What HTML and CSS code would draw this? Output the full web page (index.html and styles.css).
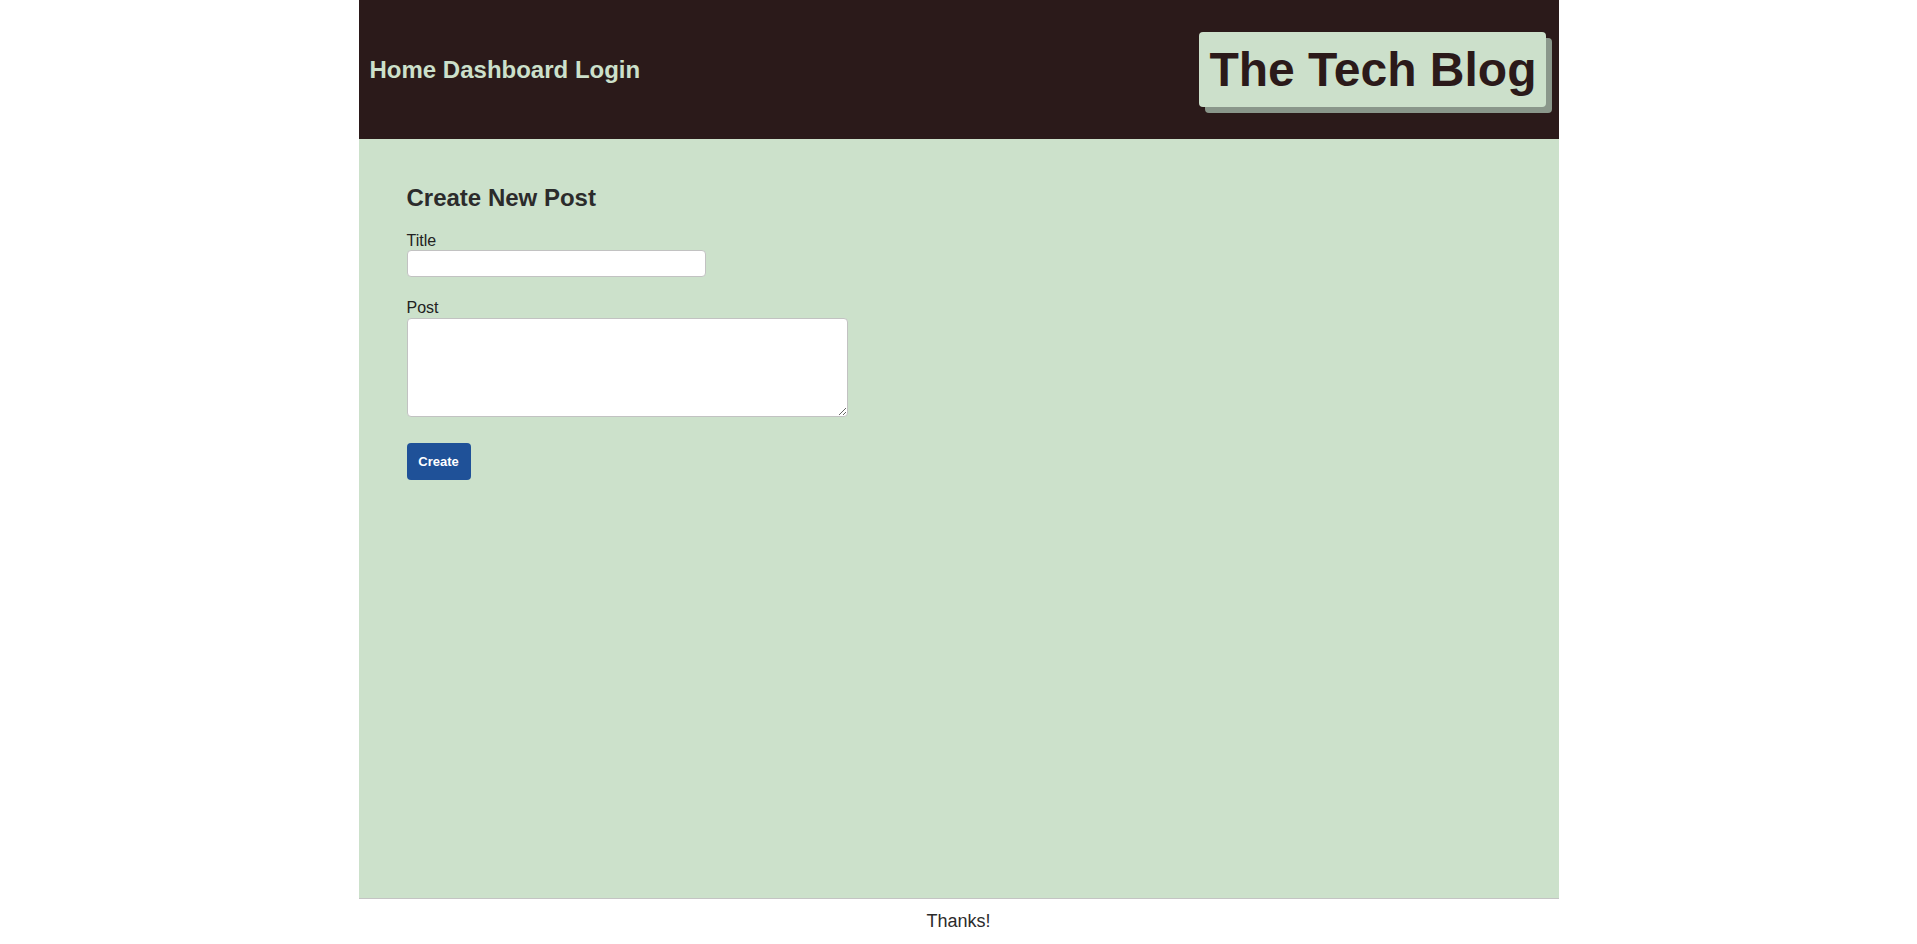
FILE: index.html
```html
<!DOCTYPE html>
<html lang="en">
<head>
<meta charset="utf-8">
<title>The Tech Blog</title>
<link rel="stylesheet" href="styles.css">
</head>
<body>
<div class="page">
  <header class="site-header">
    <nav class="site-nav">
      <a href="#">Home</a> <a href="#">Dashboard</a> <a href="#">Login</a>
    </nav>
    <h1 class="logo">The Tech Blog</h1>
  </header>
  <main class="content">
    <h2 class="form-title">Create New Post</h2>
    <form class="post-form">
      <div class="field">
        <label class="field-label" for="title">Title</label>
        <input class="title-input" id="title" type="text">
      </div>
      <div class="field field-post">
        <label class="field-label" for="post">Post</label>
        <textarea class="post-input" id="post"></textarea>
      </div>
      <button class="create-btn" type="submit">Create</button>
    </form>
  </main>
  <footer class="site-footer">Thanks!</footer>
</div>
</body>
</html>
```

FILE: styles.css
```css
html, body {
  margin: 0;
  padding: 0;
  background: #ffffff;
}

body {
  font-family: "Liberation Sans", Arial, sans-serif;
  color: #2b2b2b;
}

.page {
  max-width: 1200px;
  margin: 0 auto;
  min-height: 100vh;
  display: flex;
  flex-direction: column;
}

.site-header {
  height: 139px;
  background: #2b1a1a;
  display: flex;
  align-items: center;
  justify-content: space-between;
  padding: 0 13px 0 11px;
  box-sizing: border-box;
  flex-shrink: 0;
}

.site-nav {
  font-size: 24px;
  font-weight: bold;
  margin-top: 1px;
}

.site-nav a {
  color: #cce0cb;
  text-decoration: none;
}

.logo {
  margin: 0;
  font-size: 48px;
  font-weight: bold;
  color: #2b1a1a;
  background: #cce0cb;
  padding: 10px 9px 10px 10px;
  border-radius: 4px;
  box-shadow: 6px 6px 0 #8a978b;
  line-height: 55px;
}

.content {
  flex: 1;
  background: #cce1cb;
  padding: 45px 48px;
}

.form-title {
  margin: 0 0 20px;
  font-size: 24px;
  font-weight: bold;
  color: #2b2b2b;
}

.post-form {
  display: flex;
  flex-direction: column;
  align-items: flex-start;
}

.field {
  display: flex;
  flex-direction: column;
  align-items: flex-start;
}

.field-post {
  margin-top: 22px;
}

.field-label {
  font-size: 16px;
  color: #222222;
}

.title-input {
  box-sizing: border-box;
  width: 299px;
  height: 27px;
  margin: 0;
  border: 1px solid #c2c2c2;
  border-radius: 4px;
  background: #ffffff;
}

.post-input {
  box-sizing: border-box;
  width: 441px;
  height: 99px;
  margin: 1px 0 0;
  border: 1px solid #c2c2c2;
  border-radius: 4px;
  background: #ffffff;
}

.create-btn {
  margin-top: 26px;
  width: 64px;
  height: 37px;
  background: #1f5198;
  color: #ffffff;
  border: none;
  border-radius: 4px;
  font-family: "Liberation Sans", Arial, sans-serif;
  font-size: 13px;
  font-weight: bold;
  padding: 0;
}

.site-footer {
  border-top: 1px solid #c4c4c4;
  text-align: center;
  font-size: 18px;
  color: #2b2b2b;
  padding: 12px 0;
  flex-shrink: 0;
}
```
